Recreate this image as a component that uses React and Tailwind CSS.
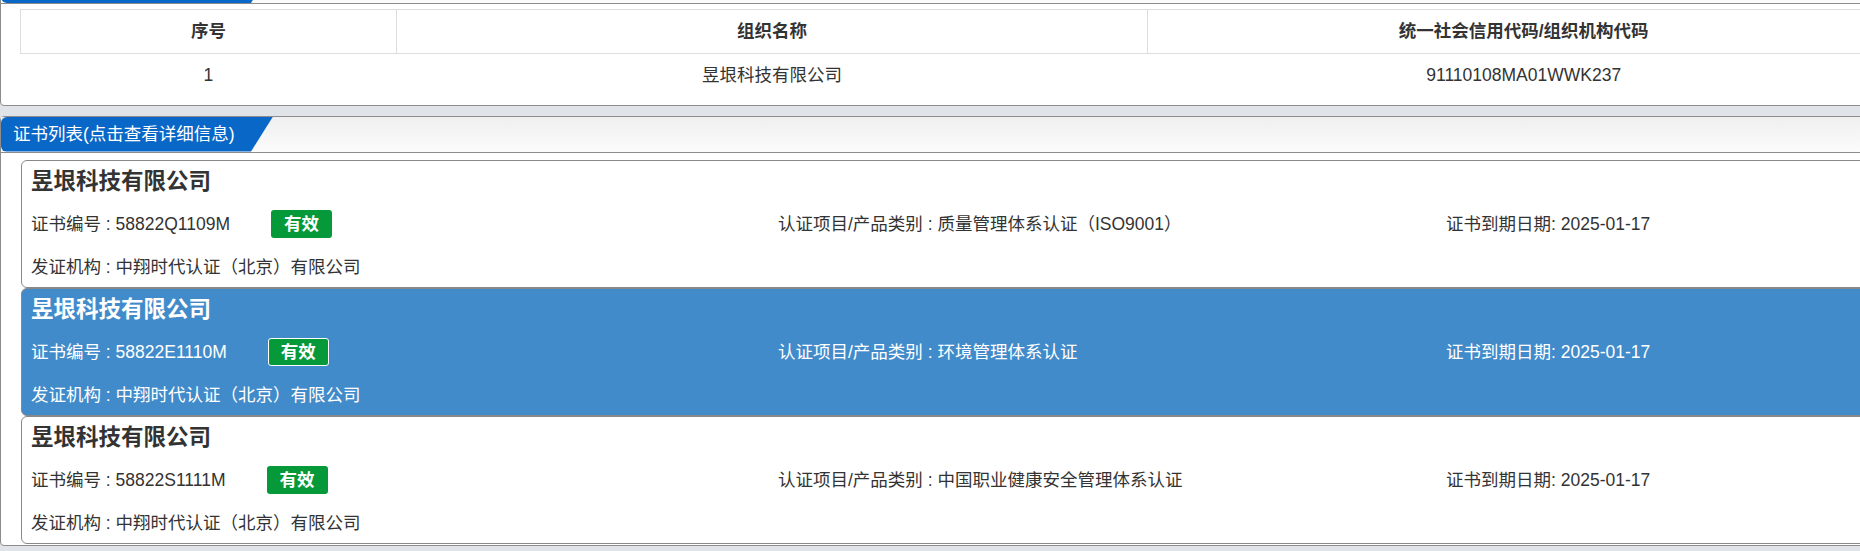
import React from 'react';

const certs = [
  { no: '58822Q1109M', item: '质量管理体系认证（ISO9001）' },
  { no: '58822E1110M', item: '环境管理体系认证', active: true },
  { no: '58822S1111M', item: '中国职业健康安全管理体系认证' },
];

const PanelHeader = ({ title }) => (
  <div className="h-[36px] border-b border-[#8c8c8c] bg-gradient-to-b from-[#efefef] to-[#fcfcfc] flex">
    <div className="h-full w-[272px] bg-[#0867c7] rounded-tl-[6px] rounded-bl-[6px] [clip-path:polygon(0_0,272px_0,250px_100%,0_100%)] flex items-center pl-[12px] text-white text-[17.5px] leading-[20px]">
      {title}
    </div>
  </div>
);

const App = () => {
  return (
    <div
      className="w-[1860px] h-[551px] overflow-hidden bg-[#e0e4e8] text-[#333]"
      style={{ fontFamily: '"Liberation Sans", "Noto Sans CJK SC", sans-serif' }}
    >
      <div className="w-[1920px] mt-[-33px]">
        {/* 组织信息 (header scrolled off the top) */}
        <div className="bg-white border border-[#8c8c8c] rounded-[4px]">
          <PanelHeader title="" />
          <div className="pl-[19px] pr-[19px] pt-[5px] pb-[9px]">
            <table className="w-full border-collapse text-[17.5px]">
              <thead>
                <tr className="h-[44px]">
                  <th className="w-[20%] border border-[#dddddd] font-bold">序号</th>
                  <th className="w-[40%] border border-[#dddddd] font-bold">组织名称</th>
                  <th className="w-[40%] border border-[#dddddd] font-bold">统一社会信用代码/组织机构代码</th>
                </tr>
              </thead>
              <tbody>
                <tr className="h-[42px]">
                  <td className="text-center">1</td>
                  <td className="text-center">昱垠科技有限公司</td>
                  <td className="text-center">91110108MA01WWK237</td>
                </tr>
              </tbody>
            </table>
          </div>
        </div>

        {/* 证书列表 */}
        <div className="mt-[10px] bg-white border border-[#8c8c8c] rounded-[4px]">
          <PanelHeader title="证书列表(点击查看详细信息)" />
          <div className="pl-[20px] pr-[20px] pt-[7px] pb-[1px]">
            {certs.map((c, i) => (
              <div
                key={i}
                className={`h-[128px] border border-[#888] rounded-[6px] pl-[9px] cursor-pointer ${
                  c.active ? 'bg-[#428bca] text-white' : 'bg-white text-[#333]'
                }`}
              >
                <div className="h-[42px] flex items-center text-[22.5px] font-bold leading-[28px]">
                  昱垠科技有限公司
                </div>
                <div className="h-[43px] flex items-center text-[17.5px] leading-[22px]">
                  <div className="w-[747px] flex items-center">
                    <span>证书编号 : {c.no}</span>
                    <span
                      className={`ml-[41px] w-[61px] h-[28px] rounded-[3px] bg-[#05993a] text-white font-bold flex items-center justify-center ${
                        c.active ? 'border border-white' : ''
                      }`}
                    >
                      有效
                    </span>
                  </div>
                  <div className="w-[668px]">认证项目/产品类别 : {c.item}</div>
                  <div>证书到期日期: 2025-01-17</div>
                </div>
                <div className="h-[41px] pt-[2px] flex items-center text-[17.5px] leading-[22px]">
                  发证机构 : 中翔时代认证（北京）有限公司
                </div>
              </div>
            ))}
          </div>
        </div>
      </div>
    </div>
  );
};

export default App;
